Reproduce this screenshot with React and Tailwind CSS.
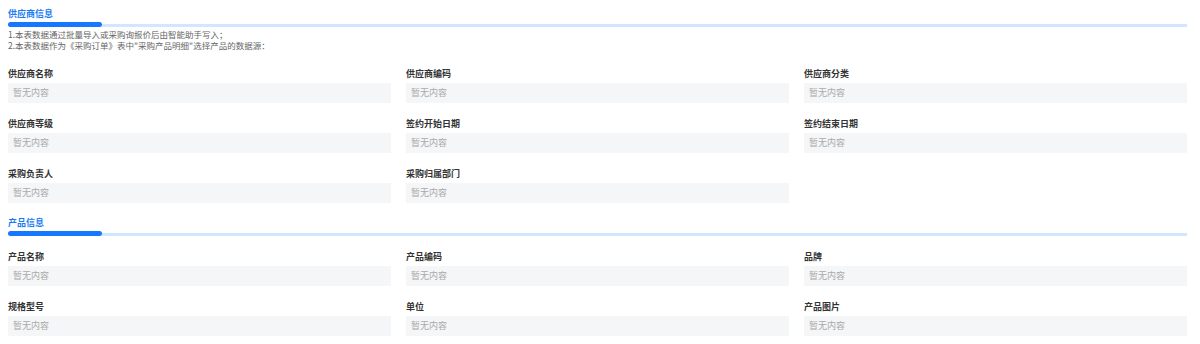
import React from 'react'

const supplierFields = [
  '供应商名称', '供应商编码', '供应商分类',
  '供应商等级', '签约开始日期', '签约结束日期',
  '采购负责人', '采购归属部门',
]

const productFields = [
  '产品名称', '产品编码', '品牌',
  '规格型号', '单位', '产品图片',
]

function SectionTitle({ title }) {
  return (
    <div>
      <div className="text-[9px] leading-[12px] font-bold text-[#1a7cf5]">{title}</div>
      <div className="mt-[2px] flex items-end">
        <div className="w-[94px] h-[5px] rounded-full bg-[#1677ff]" />
        <div className="flex-1 h-[3px] bg-[#d3e6ff]" />
      </div>
    </div>
  )
}

function Field({ label }) {
  return (
    <div>
      <div className="text-[9px] leading-[12px] font-bold text-[#333]">{label}</div>
      <div className="mt-[3px] h-[20px] bg-[#f5f6f8] px-[5px] flex items-center text-[9px] text-[#aaa]">
        暂无内容
      </div>
    </div>
  )
}

export default function App() {
  return (
    <div
      className="w-[1200px] h-[344px] bg-white overflow-hidden"
      style={{ fontFamily: '"Noto Sans CJK SC", "Noto Sans", sans-serif' }}
    >
      <div className="w-[1179px] ml-2 pt-2">
        <SectionTitle title="供应商信息" />
        <div className="mt-[2px] text-[8.5px] leading-[11px] text-[#666]">
          <div>1.本表数据通过批量导入或采购询报价后由智能助手写入；</div>
          <div>2.本表数据作为《采购订单》表中"采购产品明细"选择产品的数据源：</div>
        </div>
        <div className="mt-[17px] grid grid-cols-3 gap-x-[15px] gap-y-[15px]">
          {supplierFields.map(f => <Field key={f} label={f} />)}
        </div>

        <div className="mt-[14px]">
          <SectionTitle title="产品信息" />
        </div>
        <div className="mt-[15px] grid grid-cols-3 gap-x-[15px] gap-y-[15px]">
          {productFields.map(f => <Field key={f} label={f} />)}
        </div>
      </div>
    </div>
  )
}
